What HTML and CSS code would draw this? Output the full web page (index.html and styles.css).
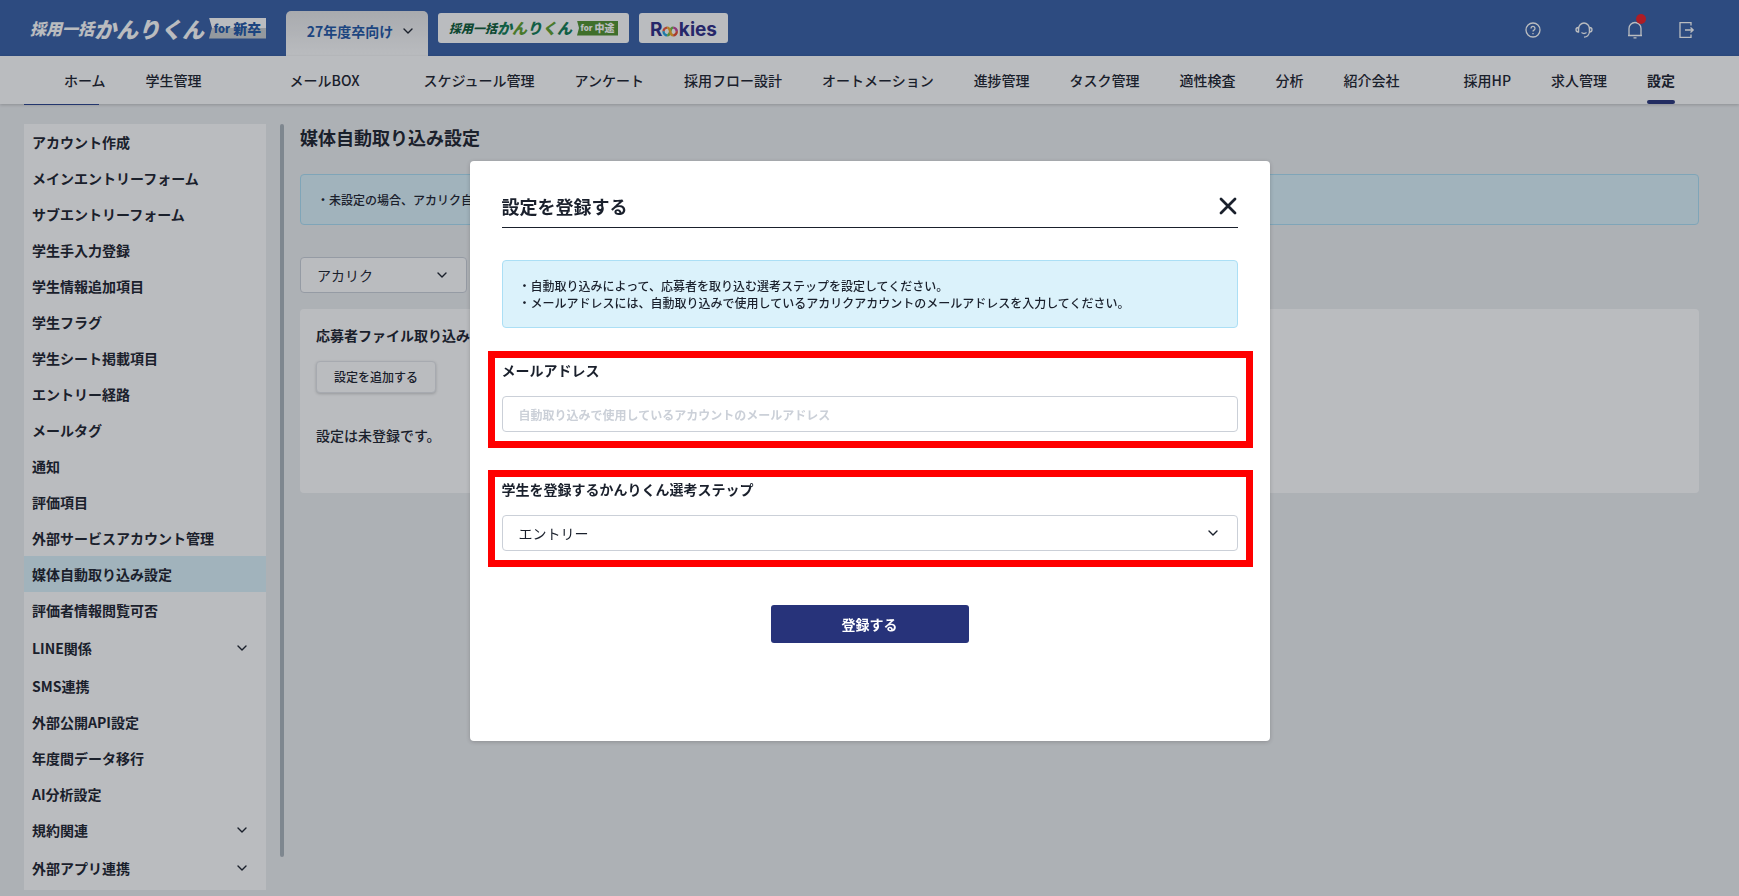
FILE: index.html
```
<!DOCTYPE html>
<html lang="ja">
<head>
    <meta charset="UTF-8">
    <meta name="viewport" content="width=device-width, initial-scale=1.0">
    <title>媒体自動取り込み設定 - 採用一括かんりくん</title>
    <link rel="stylesheet" href="styles.css">
</head>
<body>
    <!-- アイコン定義 -->
    <svg class="icon-defs" width="0" height="0" aria-hidden="true">
        <symbol id="chevron" viewBox="0 0 10 6">
            <path d="M1 1l4 4 4-4" fill="none" stroke="currentColor" stroke-width="1.4" stroke-linecap="round" stroke-linejoin="round"/>
        </symbol>
    </svg>

    <header class="header">
        <a href="#" class="logo">
            <span class="logo-small">採用一括</span>
            <span class="logo-large">かんりくん</span>
            <span class="logo-badge"><small>for</small>新卒</span>
        </a>
        <button type="button" class="year-tab">
            27年度卒向け
            <svg class="chevron"><use href="#chevron"/></svg>
        </button>
        <div class="service-links">
            <a href="#" class="service-link service-chuto">
                <span class="chuto-small">採用一括</span>
                <span class="chuto-large">か<i>ん</i>り<i>く</i>ん</span>
                <span class="chuto-badge"><small>for</small>中途</span>
            </a>
            <a href="#" class="service-link service-rookies" aria-label="Rookies">
                <span>R</span>
                <svg width="19" height="13" viewBox="0 0 19 13" fill="none" stroke-width="2.8">
                    <path d="M1.8 6.5A4.300 4.600 0 0 1 6 2" stroke="#f0553c"/>
                    <path d="M1.800 6.300A4.300 4.600 0 0 0 6 11" stroke="#1fa3e0"/>
                    <path d="M6 11C8 11 9 9 9.500 6.500S11 2 13 2" stroke="#6cba45"/>
                    <path d="M6 2C8 2 9 4 9.500 6.500S11 11 13 11" stroke="#f5a623"/>
                    <path d="M13 2A4.300 4.600 0 0 1 17.200 6.500" stroke="#c43f9b"/>
                    <path d="M17.200 6.300A4.300 4.600 0 0 1 13 11" stroke="#e8472c"/>
                </svg>
                <span>kies</span>
            </a>
        </div>
        <div class="header-icons">
            <button type="button" class="icon-btn" aria-label="ヘルプ">
                <svg width="18" height="18" viewBox="0 0 18 18">
                    <circle cx="9" cy="9" r="7"/>
                    <path d="M7 7.400a2 2 0 1 1 3 1.700c-.7.4-1 .7-1 1.400M9 12v1.200"/>
                </svg>
            </button>
            <button type="button" class="icon-btn" aria-label="サポート">
                <svg width="18" height="18" viewBox="0 0 18 18">
                    <path d="M3.500 11V8a5.500 6 0 0 1 11 0v3"/>
                    <path d="M3.500 6.500c-1.600 0-2.500 1-2.500 2.200S1.900 11 3.500 11zM14.500 6.500c1.600 0 2.500 1 2.500 2.200S16.100 11 14.500 11z"/>
                    <path d="M14.500 11c-.5 3-2.500 5-5.500 5.200M6.500 11.500c1.500 1.200 3.500 1.200 5 0"/>
                </svg>
            </button>
            <button type="button" class="icon-btn" aria-label="通知">
                <svg width="18" height="18" viewBox="0 0 18 18">
                    <path d="M3 14.500V7.500a6 6 0 0 1 12 0v7zM2 14.500h14M7.500 16.800h3"/>
                </svg>
                <span class="notice-dot"></span>
            </button>
            <button type="button" class="icon-btn" aria-label="ログアウト">
                <svg width="18" height="18" viewBox="0 0 18 18">
                    <path d="M14 4.500V1.700H3v14.600h11v-2.800M8 9h8M13.500 6.500L16.200 9l-2.700 2.500"/>
                </svg>
            </button>
        </div>
    </header>

    <nav class="global-nav">
        <a href="#">ホーム</a>
        <a href="#">学生管理<span class="count count-wide"></span></a>
        <a href="#">メールBOX<span class="count"></span></a>
        <a href="#">スケジュール管理</a>
        <a href="#">アンケート</a>
        <a href="#">採用フロー設計</a>
        <a href="#">オートメーション</a>
        <a href="#">進捗管理</a>
        <a href="#">タスク管理</a>
        <a href="#">適性検査</a>
        <a href="#">分析</a>
        <a href="#">紹介会社<span class="count"></span></a>
        <a href="#">採用HP</a>
        <a href="#">求人管理</a>
        <a href="#" class="current">設定</a>
    </nav>

    <div class="layout">
        <aside class="sidebar">
            <a href="#">アカウント作成</a>
            <a href="#">メインエントリーフォーム</a>
            <a href="#">サブエントリーフォーム</a>
            <a href="#">学生手入力登録</a>
            <a href="#">学生情報追加項目</a>
            <a href="#">学生フラグ</a>
            <a href="#">学生シート掲載項目</a>
            <a href="#">エントリー経路</a>
            <a href="#">メールタグ</a>
            <a href="#">通知</a>
            <a href="#">評価項目</a>
            <a href="#">外部サービスアカウント管理</a>
            <a href="#" class="active">媒体自動取り込み設定</a>
            <a href="#">評価者情報閲覧可否</a>
            <button type="button" class="group">LINE関係<svg class="chevron"><use href="#chevron"/></svg></button>
            <a href="#">SMS連携</a>
            <a href="#">外部公開API設定</a>
            <a href="#">年度間データ移行</a>
            <a href="#">AI分析設定</a>
            <button type="button">規約関連<svg class="chevron"><use href="#chevron"/></svg></button>
            <button type="button" class="group">外部アプリ連携<svg class="chevron"><use href="#chevron"/></svg></button>
        </aside>
        <div class="scroll-bar"></div>

        <main class="content">
            <h1 class="page-title">媒体自動取り込み設定</h1>
            <div class="info-box">・未設定の場合、アカリク自</div>
            <div class="select-wrap media-select">
                <select class="field" aria-label="媒体">
                    <option>アカリク</option>
                </select>
                <svg class="chevron"><use href="#chevron"/></svg>
            </div>
            <section class="card">
                <h2>応募者ファイル取り込み</h2>
                <button type="button" class="btn-add">設定を追加する</button>
                <p>設定は未登録です。</p>
            </section>
        </main>
    </div>

    <!-- 設定登録モーダル -->
    <div class="overlay">
        <form class="modal" role="dialog" aria-modal="true" aria-labelledby="modalTitle">
            <div class="modal-header">
                <h2 id="modalTitle">設定を登録する</h2>
                <button type="button" class="btn-close" aria-label="閉じる">
                    <svg width="18" height="18" viewBox="0 0 18 18">
                        <path d="M2 2l14 14M16 2L2 16" stroke="currentColor" stroke-width="2.800" stroke-linecap="round"/>
                    </svg>
                </button>
            </div>
            <div class="info-box">
                ・自動取り込みによって、応募者を取り込む選考ステップを設定してください。<br>
                ・メールアドレスには、自動取り込みで使用しているアカリクアカウントのメールアドレスを入力してください。
            </div>
            <div class="form-group">
                <label for="email">メールアドレス</label>
                <input type="email" id="email" class="field" placeholder="自動取り込みで使用しているアカウントのメールアドレス">
            </div>
            <div class="form-group">
                <label for="step">学生を登録するかんりくん選考ステップ</label>
                <div class="select-wrap">
                    <select id="step" class="field">
                        <option>エントリー</option>
                    </select>
                    <svg class="chevron"><use href="#chevron"/></svg>
                </div>
            </div>
            <button type="submit" class="btn-submit">登録する</button>
        </form>
    </div>
</body>
</html>
```
FILE: styles.css
```
* {
    margin: 0;
    padding: 0;
    box-sizing: border-box;
}

body {
    font-family: "Noto Sans CJK JP", sans-serif;
    font-size: 14px;
    line-height: 20px;
    color: #1a202c;
    background: #edeff1;
    min-height: 100vh;
}

a {
    color: inherit;
    text-decoration: none;
}

button,
input,
select {
    font: inherit;
    color: inherit;
}

button {
    background: none;
    border: none;
    cursor: pointer;
}

.icon-defs {
    position: absolute;
}

.chevron {
    width: 10px;
    height: 6px;
    flex-shrink: 0;
}

/* ヘッダー */
.header {
    display: flex;
    align-items: flex-start;
    height: 56px;
    padding: 0 36px 0 30px;
    background: #355da5;
}

.logo {
    display: flex;
    align-items: center;
    width: 236px;
    height: 56px;
    color: white;
    font-weight: 900;
    white-space: nowrap;
}

.logo-small {
    font-size: 16px;
    font-style: italic;
}

.logo-large {
    font-size: 22px;
    font-style: italic;
}

.logo-badge {
    display: flex;
    align-items: center;
    justify-content: center;
    gap: 3px;
    width: 57px;
    height: 21px;
    margin-left: auto;
    background: linear-gradient(white 50%, #c9cdd0 50%);
    clip-path: polygon(0 0, 100% 0, 100% 100%, 0 100%, 3px 50%);
    color: #1d55a5;
    font-size: 14px;
}

.logo-badge small {
    font-size: 11px;
}

.year-tab {
    display: flex;
    align-items: center;
    justify-content: center;
    gap: 10px;
    width: 142px;
    height: 45px;
    margin: 11px 10px 0 20px;
    padding: 0 0 6px 6px;
    border-radius: 5px 5px 0 0;
    background: linear-gradient(#e6e6e8, white);
    font-weight: 700;
    color: #1d55a5;
}

.year-tab .chevron {
    color: #1a202c;
}

.service-links {
    display: flex;
    gap: 10px;
    margin-top: 13px;
}

.service-link {
    display: flex;
    align-items: center;
    height: 30px;
    padding: 0 11px;
    border-radius: 3px;
    background: white;
    white-space: nowrap;
}

.service-chuto {
    width: 191px;
    font-weight: 900;
    color: #0d7a52;
}

.chuto-small {
    font-size: 12px;
    font-style: italic;
    color: #0b5a35;
}

.chuto-large {
    font-size: 15px;
    font-style: italic;
}

.chuto-large i {
    color: #5d9f2c;
}

.chuto-badge {
    display: flex;
    align-items: center;
    justify-content: center;
    gap: 2px;
    width: 41px;
    height: 15px;
    margin-left: auto;
    background: #4f912b;
    clip-path: polygon(0 0, 100% 0, 100% 100%, 0 100%, 2px 50%);
    color: white;
    font-size: 10px;
}

.chuto-badge small {
    font-size: 8px;
}

.service-rookies {
    justify-content: center;
    width: 89px;
    padding-top: 3px;
    font-family: Inter, sans-serif;
    font-size: 19px;
    font-weight: 700;
    color: #2b2a86;
}

.service-rookies svg {
    margin-top: 3px;
}

.header-icons {
    display: flex;
    gap: 33px;
    margin: 21px 0 0 auto;
    padding-right: 8px;
}

.icon-btn {
    position: relative;
    display: flex;
}

.icon-btn svg {
    fill: none;
    stroke: white;
    stroke-width: 1.3;
}

.notice-dot {
    position: absolute;
    top: -7px;
    right: -2px;
    width: 10px;
    height: 10px;
    border-radius: 50%;
    background: #ed1c24;
}

/* グローバルナビ */
.global-nav {
    position: relative;
    display: flex;
    justify-content: space-between;
    height: 48px;
    padding: 0 64px;
    background: white;
    box-shadow: 0 1px 3px rgba(0, 0, 0, 0.2);
    font-weight: 500;
    white-space: nowrap;
}

.global-nav::after {
    content: "";
    position: absolute;
    left: 24px;
    bottom: -1px;
    width: 75px;
    height: 1px;
    background: #27408b;
}

.global-nav a {
    display: flex;
    align-items: center;
    border-bottom: 4px solid transparent;
    padding-top: 4px;
}

.global-nav .current {
    position: relative;
    font-weight: 700;
}

.global-nav .current::after {
    content: "";
    position: absolute;
    left: 0;
    right: 0;
    bottom: -4px;
    height: 4px;
    border-radius: 2px;
    background: #27337a;
}

.count {
    width: 24px;
}

.count-wide {
    width: 48px;
}

/* サイドバー */
.layout {
    display: flex;
    align-items: flex-start;
    padding: 20px 40px 6px 24px;
}

.sidebar {
    width: 242px;
    flex-shrink: 0;
    padding-bottom: 2px;
    background: white;
    font-weight: 700;
}

.sidebar a,
.sidebar button {
    display: flex;
    align-items: center;
    justify-content: space-between;
    width: 100%;
    height: 36px;
    padding: 0 19px 0 8px;
    font-weight: 700;
}

.sidebar .group {
    height: 40px;
}

.sidebar .active {
    background: #dbf2fb;
}

.scroll-bar {
    width: 4px;
    height: calc(100vh - 163px);
    margin: 0 16px 0 14px;
    border-radius: 2px;
    background: #aab3bb;
}

/* メイン */
.content {
    flex: 1;
    min-width: 0;
}

.page-title {
    font-size: 18px;
    line-height: 26px;
    margin-bottom: 24px;
}

.info-box {
    padding: 16px;
    border: 1px solid #abdff5;
    border-radius: 4px;
    background: #dbf2fb;
    font-size: 12px;
    font-weight: 500;
    line-height: 17px;
}

.field {
    display: block;
    width: 100%;
    height: 36px;
    padding: 0 16px;
    border: 1px solid #cbd0d8;
    border-radius: 4px;
    background: white;
    appearance: none;
}

.field::placeholder {
    color: #cbd0d8;
    font-size: 12px;
    font-weight: 500;
}

.select-wrap {
    position: relative;
}

.select-wrap .chevron {
    position: absolute;
    top: 15px;
    right: 20px;
    pointer-events: none;
}

.media-select {
    width: 167px;
    margin: 32px 0 16px;
}

.card {
    padding: 16px 16px 48px;
    border-radius: 4px;
    background: white;
}

.card h2 {
    font-size: 14px;
    line-height: 20px;
    margin-bottom: 16px;
}

.card p {
    margin-top: 32px;
    font-weight: 500;
}

.btn-add {
    display: block;
    width: 120px;
    height: 32px;
    border: 1px solid #e4e6ea;
    border-radius: 4px;
    background: white;
    box-shadow: 0 1px 3px rgba(0, 0, 0, 0.2);
    font-size: 12px;
    font-weight: 500;
}

/* モーダル */
.overlay {
    position: fixed;
    inset: 0;
    display: flex;
    align-items: flex-start;
    justify-content: center;
    padding-top: 161px;
    background: rgba(26, 32, 44, 0.3);
}

.modal {
    width: 800px;
    max-width: 100%;
    padding: 32px 32px 98px;
    border-radius: 4px;
    background: white;
    box-shadow: 0 1px 4px rgba(0, 0, 0, 0.2);
}

.modal-header {
    display: flex;
    align-items: center;
    justify-content: space-between;
    padding-bottom: 8px;
    margin-bottom: 32px;
    border-bottom: 1px solid #1a202c;
}

.modal-header h2 {
    font-size: 18px;
    line-height: 26px;
}

.btn-close {
    display: flex;
    padding: 0 1px;
}

.modal .info-box {
    margin-bottom: 23px;
}

.form-group {
    margin: 0 -15px 22px -14px;
    padding: 2px 8px 9px 7px;
    border: 7px solid #ff0000;
}

.form-group label {
    display: block;
    margin-bottom: 16px;
    font-weight: 700;
}

.field::placeholder {
    font-weight: 700;
}

.btn-submit {
    display: block;
    width: 198px;
    height: 38px;
    margin: 38px auto 0;
    border-radius: 3px;
    background: #27337a;
    color: white;
    font-weight: 700;
}
```
